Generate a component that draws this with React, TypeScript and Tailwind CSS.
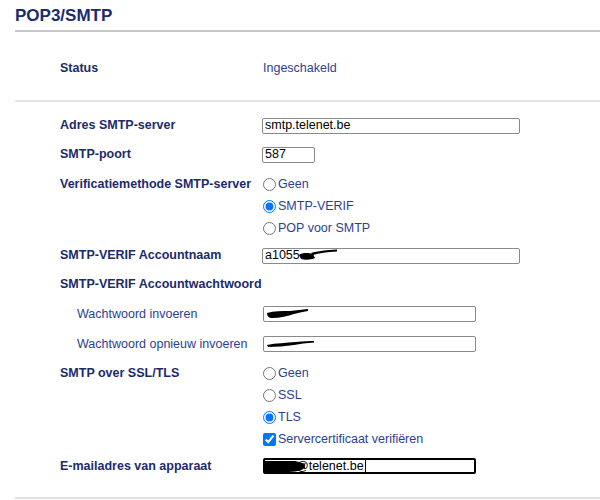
import type { ReactNode } from "react";

// Web config page: POP3/SMTP settings

function Label({ children, sub }: { children: ReactNode; sub?: boolean }) {
  return (
    <div
      className={
        sub
          ? "w-[202px] whitespace-nowrap pl-[17px] text-[#2d3e93]"
          : "w-[202px] whitespace-nowrap font-bold text-[#1c2b6b]"
      }
    >
      {children}
    </div>
  );
}

function Row({ label, sub, h = "h-[29px]", children }: { label: ReactNode; sub?: boolean; h?: string; children?: ReactNode }) {
  return (
    <div className={`flex items-center ${h}`}>
      <Label sub={sub}>{label}</Label>
      <div className="flex items-center">{children}</div>
    </div>
  );
}

function TextBox({ width, children, focused }: { width: string; children?: ReactNode; focused?: boolean }) {
  return (
    <div
      className={`relative flex h-[16px] items-center overflow-hidden bg-white px-[2px] text-[12.5px] leading-none text-black ${width} ${
        focused ? "rounded-[2px] border-2 border-black" : "rounded-[2px] border border-[#8a8a8a]"
      }`}
    >
      {children}
    </div>
  );
}

function Radio({ checked, label }: { checked?: boolean; label: string }) {
  return (
    <label className="flex h-[22px] items-center text-[#2d3e93]">
      <input type="radio" readOnly checked={!!checked} className="m-0 mr-[2px] h-[13px] w-[13px] accent-[#0075ff]" />
      {label}
    </label>
  );
}

function Scribble({ d, w, h, className }: { d: string; w: number; h: number; className: string }) {
  return (
    <svg width={w} height={h} viewBox={`0 0 ${w} ${h}`} className={`pointer-events-none absolute ${className}`}>
      <path d={d} fill="black" />
    </svg>
  );
}

export default function App() {
  return (
    <div className="min-h-[500px] bg-white font-['Liberation_Sans',Arial,sans-serif] text-[12.5px]">
      <div className="ml-[15px]">
        <div className="flex h-[32px] items-center border-b-2 border-[#c8c8c8] pt-[1px] text-[17px] font-bold text-[#1c2b6b]">
          POP3/SMTP
        </div>

        <div className="flex h-[70px] items-center border-b-2 border-[#e6e6e6] pl-[45px] pt-[5px]">
          <Label>Status</Label>
          <div className="pl-[1px] text-[#2d3e93]">Ingeschakeld</div>
        </div>

        <div className="border-b-2 border-[#e0e0e0] pb-[16px] pl-[45px] pt-[9px]">
          <Row label="Adres SMTP-server">
            <TextBox width="w-[258px]">smtp.telenet.be</TextBox>
          </Row>
          <Row label="SMTP-poort">
            <TextBox width="w-[53px]">587</TextBox>
          </Row>
          <div className="flex pb-[2px] pt-[4px]">
            <div className="flex h-[22px] items-center">
              <Label>Verificatiemethode SMTP-server</Label>
            </div>
            <div className="flex flex-col pl-[1px]">
              <Radio label="Geen" />
              <Radio checked label="SMTP-VERIF" />
              <Radio label="POP voor SMTP" />
            </div>
          </div>
          <Row label="SMTP-VERIF Accountnaam">
            <TextBox width="w-[258px]">
              a1055
              <Scribble
                w={42}
                h={12}
                className="left-[34px] top-[0px]"
                d="M2 6 C6 3 12 4 16 5 L18 9 C14 11 8 11 4 10 Z M14 4 C20 2 30 1 40 0.5 L40 2.5 C30 3 22 4 16 6 Z"
              />
            </TextBox>
          </Row>
          <Row label="SMTP-VERIF Accountwachtwoord" h="h-[29px]" />
          <Row label="Wachtwoord invoeren" sub h="h-[30px]">
            <TextBox width="w-[213px] ml-[1px]">
              <Scribble
                w={44}
                h={12}
                className="left-[2px] top-[1px]"
                d="M1 5 C8 3 16 3 24 3 C30 2 36 2 42 1 L42 3 C36 4 32 5 28 6 C22 8 14 10 6 10 C3 10 1 8 1 5 Z"
              />
            </TextBox>
          </Row>
          <Row label="Wachtwoord opnieuw invoeren" sub h="h-[30px]">
            <TextBox width="w-[213px] ml-[1px]">
              <Scribble
                w={50}
                h={10}
                className="left-[2px] top-[2px]"
                d="M1 6 C10 4 20 4 30 3 C38 2 44 2 48 2 L48 3.5 C40 4 34 5 28 6 C20 7 10 8 2 8 Z"
              />
            </TextBox>
          </Row>
          <div className="flex pb-[1px] pt-[3px]">
            <div className="flex h-[22px] items-center">
              <Label>SMTP over SSL/TLS</Label>
            </div>
            <div className="flex flex-col pl-[1px]">
              <Radio label="Geen" />
              <Radio label="SSL" />
              <Radio checked label="TLS" />
              <label className="flex h-[22px] items-center text-[#2d3e93]">
                <input type="checkbox" readOnly checked className="m-0 mr-[2px] h-[13px] w-[13px] accent-[#0075ff]" />
                Servercertificaat verifiëren
              </label>
            </div>
          </div>
          <Row label="E-mailadres van apparaat" h="h-[30px]">
            <TextBox width="w-[213px] ml-[1px]" focused>
              <span className="pl-[29px]">@telenet.be</span>
              <span className="ml-[1px] h-[13px] w-px bg-black" />
              <Scribble
                w={42}
                h={14}
                className="left-0 top-0"
                d="M0 1 L30 1 C36 2 40 4 40 7 C38 11 30 12 20 12 L0 13 Z"
              />
            </TextBox>
          </Row>
        </div>
      </div>
    </div>
  );
}
